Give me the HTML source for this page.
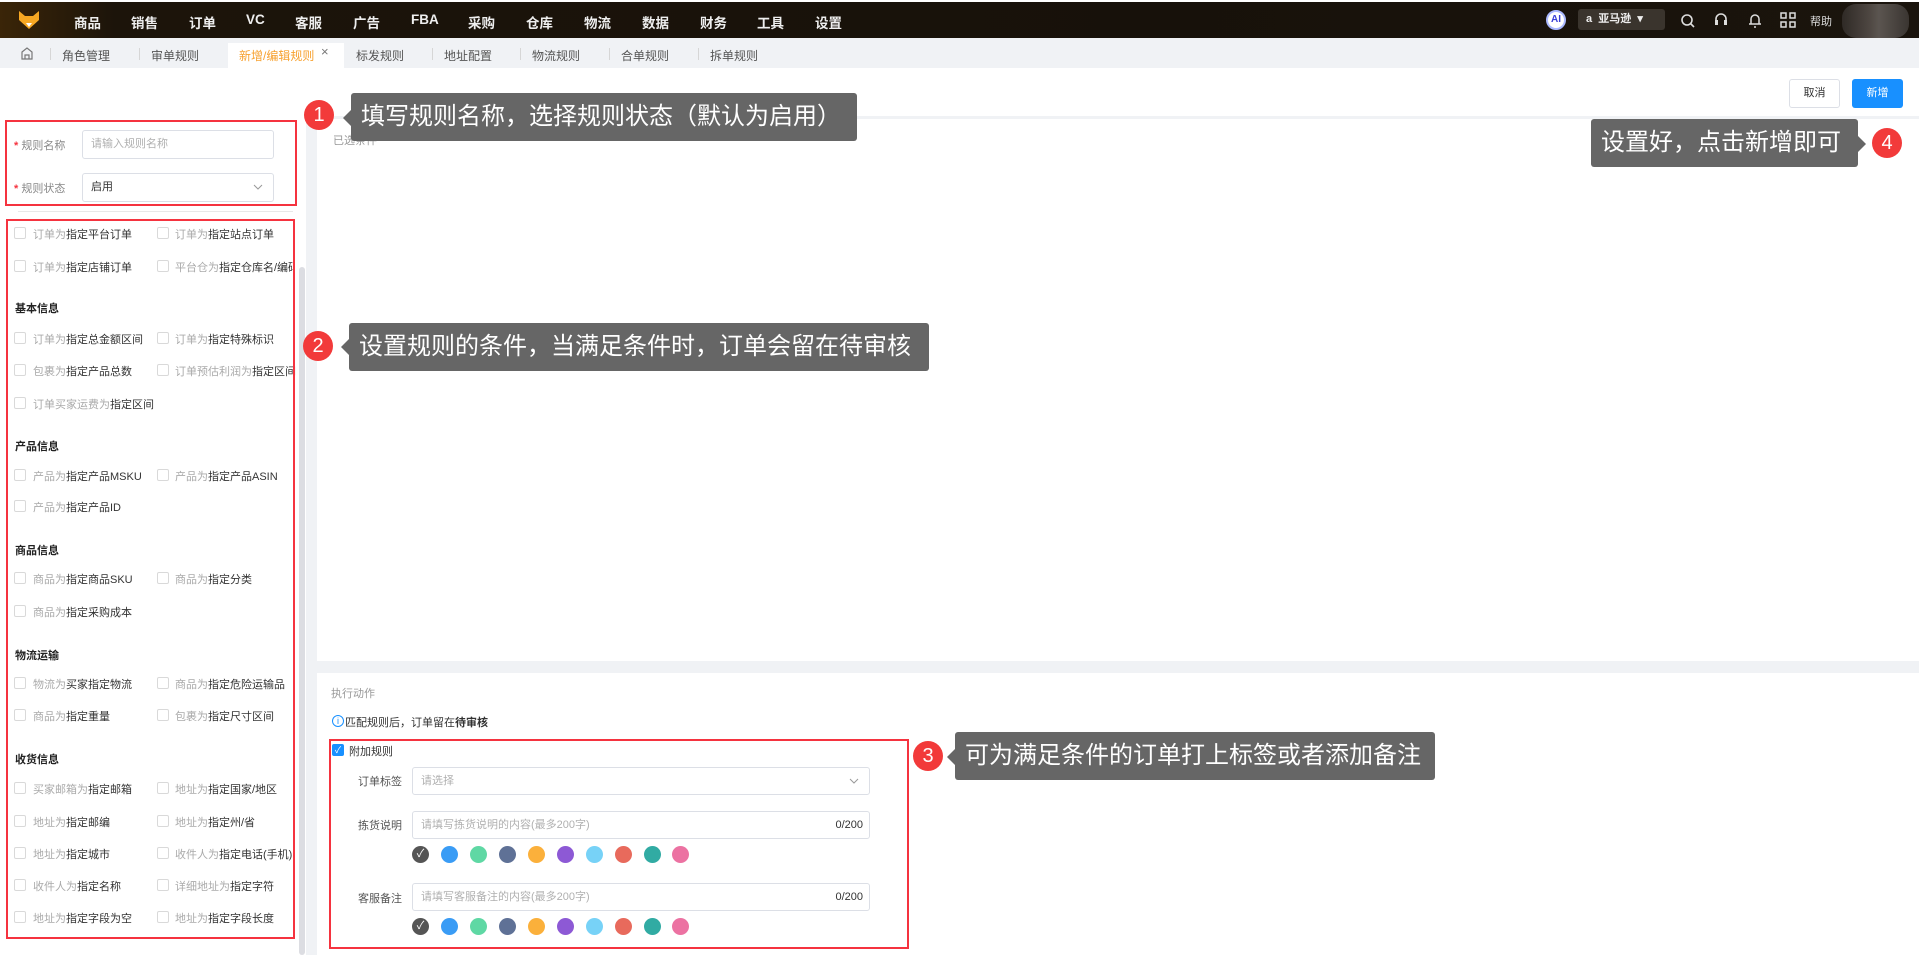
<!DOCTYPE html>
<html><head><meta charset="utf-8">
<style>
*{margin:0;padding:0;box-sizing:border-box}
body{width:1919px;height:955px;overflow:hidden;background:#f0f2f5;font-family:"Liberation Sans","Noto Sans CJK SC",sans-serif;position:relative;color:#333}
.a{position:absolute}
.nav{left:0;top:2px;width:1919px;height:36px;background:linear-gradient(90deg,#3a2508 0%,#1c140a 6%,#17110a 60%,#1a140d 100%)}
.nav .m{position:absolute;top:10px;color:#eee;font-size:13.5px;font-weight:600}
.tabs{left:0;top:38px;width:1919px;height:30px;background:#f0f2f5}
.tab{position:absolute;top:9px;font-size:12px;color:#555}
.sep{position:absolute;top:10px;width:1px;height:12px;background:#d6d6d6}
.lp{left:0;top:68px;width:306px;height:887px;background:#fff}
.t12{font-size:12px}
.cb{position:absolute;width:12px;height:12px;border:1px solid #d9d9d9;border-radius:2px;background:#fff}
.lbl{position:absolute;font-size:11px;color:#333;white-space:nowrap}
.lbl i{font-style:normal;color:#aaa}
.h{position:absolute;left:15px;font-size:11px;font-weight:bold;color:#222}
.redbox{position:absolute;border:2px solid #f5333f}
.tip{position:absolute;background:#666;color:#fff;font-size:24px;line-height:48px;padding:0 10px;border-radius:3px;white-space:nowrap}
.num{position:absolute;width:30px;height:30px;border-radius:50%;background:#f23a3a;color:#fff;font-size:20px;text-align:center;line-height:30px}
.inp{position:absolute;border:1px solid #dcdfe6;border-radius:3px;background:#fff;font-size:11px;color:#b0b0b0;padding-left:8px}
.dot{position:absolute;width:17px;height:17px;border-radius:50%}
.chev{position:absolute;right:10px;top:10px}
</style></head><body>

<div class="a" style="left:0;top:0;width:1919px;height:2px;background:#fff"></div>
<div class="a nav">
  <svg class="a" style="left:18px;top:8px" width="22" height="20" viewBox="0 0 22 20"><path d="M1 1 L7 6 L15 6 L21 1 L21 10 L11 19 L1 10Z" fill="#f7a823"/><path d="M8 13 L11 17 L14 13Z" fill="#fff"/></svg>
  <span class="m" style="left:74px">商品</span>
  <span class="m" style="left:131px">销售</span>
  <span class="m" style="left:189px">订单</span>
  <span class="m" style="left:246px">VC</span>
  <span class="m" style="left:295px">客服</span>
  <span class="m" style="left:353px">广告</span>
  <span class="m" style="left:411px">FBA</span>
  <span class="m" style="left:468px">采购</span>
  <span class="m" style="left:526px">仓库</span>
  <span class="m" style="left:584px">物流</span>
  <span class="m" style="left:642px">数据</span>
  <span class="m" style="left:700px">财务</span>
  <span class="m" style="left:757px">工具</span>
  <span class="m" style="left:815px">设置</span>
  <div class="a" style="left:1546px;top:8px;width:20px;height:20px;border-radius:50%;border:2px solid #aab8ff;color:#3a3fd8;font-size:10px;font-weight:bold;text-align:center;line-height:16px;background:#fff">AI</div>
  <div class="a" style="left:1578px;top:7px;width:87px;height:21px;background:#3a342d;border-radius:3px;color:#eee;font-size:11px;font-weight:bold;line-height:21px;padding-left:8px">a&nbsp; 亚马逊 &nbsp;▾</div>
  <svg class="a" style="left:1680px;top:11px" width="16" height="16" viewBox="0 0 16 16"><circle cx="7" cy="7" r="5" stroke="#ddd" stroke-width="1.6" fill="none"/><path d="M11 11 L14 14" stroke="#ddd" stroke-width="1.6"/></svg>
  <svg class="a" style="left:1713px;top:10px" width="16" height="17" viewBox="0 0 16 17"><path d="M3 10 V7 A5 5 0 0 1 13 7 V10" stroke="#ddd" stroke-width="1.6" fill="none"/><rect x="2" y="8" width="3" height="5" fill="#ddd"/><rect x="11" y="8" width="3" height="5" fill="#ddd"/></svg>
  <svg class="a" style="left:1747px;top:10px" width="16" height="17" viewBox="0 0 16 17"><path d="M4 12 V7 A4 4 0 0 1 12 7 V12 Z M2 12 H14 M7 15 H9" stroke="#ddd" stroke-width="1.5" fill="none"/></svg>
  <svg class="a" style="left:1780px;top:10px" width="16" height="16" viewBox="0 0 16 16"><g stroke="#ddd" stroke-width="1.5" fill="none"><rect x="1" y="1" width="5" height="5"/><rect x="10" y="1" width="5" height="5"/><rect x="1" y="10" width="5" height="5"/><rect x="10" y="10" width="5" height="5"/></g></svg>
  <span class="a" style="left:1810px;top:11px;color:#ddd;font-size:11px">帮助</span>
  <div class="a" style="left:1842px;top:2px;width:67px;height:34px;border-radius:14px;background:linear-gradient(90deg,#2f2a26,#4d4641 40%,#5b5550 55%,#3a3531)"></div>
</div>

<div class="a tabs">
  <svg class="a" style="left:20px;top:8px" width="14" height="14" viewBox="0 0 14 14"><path d="M2 6 L7 2 L12 6 V13 H2Z M5 13 V9 H9 V13" stroke="#777" stroke-width="1.2" fill="none"/></svg>
  <div class="sep" style="left:50px"></div><span class="tab" style="left:62px">角色管理</span>
  <div class="sep" style="left:139px"></div><span class="tab" style="left:151px">审单规则</span>
  <div class="a" style="left:228px;top:5px;width:116px;height:25px;background:#fff"></div>
  <span class="tab" style="left:239px;color:#f7a130">新增/编辑规则</span><span class="tab" style="left:321px;top:6px;font-size:13px;color:#777">×</span>
  <span class="tab" style="left:356px">标发规则</span>
  <div class="sep" style="left:432px"></div><span class="tab" style="left:444px">地址配置</span>
  <div class="sep" style="left:520px"></div><span class="tab" style="left:532px">物流规则</span>
  <div class="sep" style="left:609px"></div><span class="tab" style="left:621px">合单规则</span>
  <div class="sep" style="left:698px"></div><span class="tab" style="left:710px">拆单规则</span>
</div>

<div class="a" style="left:0;top:68px;width:1919px;height:48px;background:#fff"></div>
<span class="a" style="left:15px;top:88px;font-size:11px;color:#333">新增审单规则</span>
<div class="a" style="left:1789px;top:79px;width:51px;height:29px;border:1px solid #dcdfe6;border-radius:3px;background:#fff;font-size:11px;text-align:center;line-height:27px;color:#333">取消</div>
<div class="a" style="left:1852px;top:79px;width:51px;height:29px;border-radius:3px;background:#1890ff;font-size:11px;text-align:center;line-height:29px;color:#fff">新增</div>

<div class="a lp"></div>
<div class="a" style="left:18px;top:211px;width:275px;height:1px;background:#e8e8e8"></div>
<div class="a" style="left:299px;top:267px;width:6px;height:688px;background:#dcdde2;border-radius:3px"></div>
<span class="a" style="left:14px;top:137px;font-size:11px;color:#888"><b style="color:#f5333f">*</b> 规则名称</span>
<div class="inp" style="left:82px;top:130px;width:192px;height:29px;line-height:27px">请输入规则名称</div>
<span class="a" style="left:14px;top:180px;font-size:11px;color:#888"><b style="color:#f5333f">*</b> 规则状态</span>
<div class="inp" style="left:82px;top:173px;width:192px;height:29px;line-height:27px;color:#333">启用<svg class="chev" width="10" height="6" viewBox="0 0 10 6"><path d="M1 1 L5 5 L9 1" stroke="#999" fill="none"/></svg></div>

<div class="cb" style="left:14px;top:227px"></div><span class="lbl" style="left:33px;top:226px"><i>订单为</i>指定平台订单</span>
<div class="cb" style="left:157px;top:227px"></div><span class="lbl" style="left:175px;top:226px"><i>订单为</i>指定站点订单</span>
<div class="cb" style="left:14px;top:260px"></div><span class="lbl" style="left:33px;top:259px"><i>订单为</i>指定店铺订单</span>
<div class="cb" style="left:157px;top:260px"></div><span class="lbl" style="left:175px;top:259px;width:119px;overflow:hidden"><i>平台仓为</i>指定仓库名/编码</span>
<span class="h" style="top:300px">基本信息</span>
<div class="cb" style="left:14px;top:332px"></div><span class="lbl" style="left:33px;top:331px"><i>订单为</i>指定总金额区间</span>
<div class="cb" style="left:157px;top:332px"></div><span class="lbl" style="left:175px;top:331px"><i>订单为</i>指定特殊标识</span>
<div class="cb" style="left:14px;top:364px"></div><span class="lbl" style="left:33px;top:363px"><i>包裹为</i>指定产品总数</span>
<div class="cb" style="left:157px;top:364px"></div><span class="lbl" style="left:175px;top:363px"><i>订单预估利润为</i>指定区间</span>
<div class="cb" style="left:14px;top:397px"></div><span class="lbl" style="left:33px;top:396px"><i>订单买家运费为</i>指定区间</span>
<span class="h" style="top:438px">产品信息</span>
<div class="cb" style="left:14px;top:469px"></div><span class="lbl" style="left:33px;top:468px"><i>产品为</i>指定产品MSKU</span>
<div class="cb" style="left:157px;top:469px"></div><span class="lbl" style="left:175px;top:468px"><i>产品为</i>指定产品ASIN</span>
<div class="cb" style="left:14px;top:500px"></div><span class="lbl" style="left:33px;top:499px"><i>产品为</i>指定产品ID</span>
<span class="h" style="top:542px">商品信息</span>
<div class="cb" style="left:14px;top:572px"></div><span class="lbl" style="left:33px;top:571px"><i>商品为</i>指定商品SKU</span>
<div class="cb" style="left:157px;top:572px"></div><span class="lbl" style="left:175px;top:571px"><i>商品为</i>指定分类</span>
<div class="cb" style="left:14px;top:605px"></div><span class="lbl" style="left:33px;top:604px"><i>商品为</i>指定采购成本</span>
<span class="h" style="top:647px">物流运输</span>
<div class="cb" style="left:14px;top:677px"></div><span class="lbl" style="left:33px;top:676px"><i>物流为</i>买家指定物流</span>
<div class="cb" style="left:157px;top:677px"></div><span class="lbl" style="left:175px;top:676px"><i>商品为</i>指定危险运输品</span>
<div class="cb" style="left:14px;top:709px"></div><span class="lbl" style="left:33px;top:708px"><i>商品为</i>指定重量</span>
<div class="cb" style="left:157px;top:709px"></div><span class="lbl" style="left:175px;top:708px"><i>包裹为</i>指定尺寸区间</span>
<span class="h" style="top:751px">收货信息</span>
<div class="cb" style="left:14px;top:782px"></div><span class="lbl" style="left:33px;top:781px"><i>买家邮箱为</i>指定邮箱</span>
<div class="cb" style="left:157px;top:782px"></div><span class="lbl" style="left:175px;top:781px"><i>地址为</i>指定国家/地区</span>
<div class="cb" style="left:14px;top:815px"></div><span class="lbl" style="left:33px;top:814px"><i>地址为</i>指定邮编</span>
<div class="cb" style="left:157px;top:815px"></div><span class="lbl" style="left:175px;top:814px"><i>地址为</i>指定州/省</span>
<div class="cb" style="left:14px;top:847px"></div><span class="lbl" style="left:33px;top:846px"><i>地址为</i>指定城市</span>
<div class="cb" style="left:157px;top:847px"></div><span class="lbl" style="left:175px;top:846px"><i>收件人为</i>指定电话(手机)</span>
<div class="cb" style="left:14px;top:879px"></div><span class="lbl" style="left:33px;top:878px"><i>收件人为</i>指定名称</span>
<div class="cb" style="left:157px;top:879px"></div><span class="lbl" style="left:175px;top:878px"><i>详细地址为</i>指定字符</span>
<div class="cb" style="left:14px;top:911px"></div><span class="lbl" style="left:33px;top:910px"><i>地址为</i>指定字段为空</span>
<div class="cb" style="left:157px;top:911px"></div><span class="lbl" style="left:175px;top:910px"><i>地址为</i>指定字段长度</span>

<div class="a" style="left:317px;top:119px;width:1602px;height:542px;background:#fff"></div>
<span class="a" style="left:333px;top:132px;font-size:11px;color:#999">已选条件</span>
<div class="a" style="left:317px;top:673px;width:1602px;height:282px;background:#fff"></div>
<span class="a" style="left:331px;top:685px;font-size:11px;color:#999">执行动作</span>
<div class="a" style="left:332px;top:715px;width:12px;height:12px;border:1px solid #1890ff;border-radius:50%;color:#1890ff;font-size:9px;text-align:center;line-height:10px">i</div>
<span class="a" style="left:345px;top:714px;font-size:11px;color:#333">匹配规则后，订单留在<b>待审核</b></span>
<div class="a" style="left:332px;top:744px;width:12px;height:12px;background:#1890ff;border-radius:2px;color:#fff;font-size:9px;text-align:center;line-height:12px">✓</div>
<span class="a" style="left:349px;top:743px;font-size:11px;color:#333">附加规则</span>
<span class="a" style="left:358px;top:773px;font-size:11px;color:#555">订单标签</span>
<div class="inp" style="left:412px;top:767px;width:458px;height:28px;line-height:26px">请选择<svg class="chev" width="10" height="6" viewBox="0 0 10 6"><path d="M1 1 L5 5 L9 1" stroke="#999" fill="none"/></svg></div>
<span class="a" style="left:358px;top:817px;font-size:11px;color:#555">拣货说明</span>
<div class="inp" style="left:412px;top:811px;width:458px;height:28px;line-height:26px">请填写拣货说明的内容(最多200字)<span style="position:absolute;right:6px;color:#333">0/200</span></div>
<span class="a" style="left:358px;top:890px;font-size:11px;color:#555">客服备注</span>
<div class="inp" style="left:412px;top:883px;width:458px;height:28px;line-height:26px">请填写客服备注的内容(最多200字)<span style="position:absolute;right:6px;color:#333">0/200</span></div>

<div class="dot" style="left:412px;top:846px;background:#555;color:#fff;font-size:11px;text-align:center;line-height:17px">✓</div>
<div class="dot" style="left:441px;top:846px;background:#3a9cf5"></div>
<div class="dot" style="left:470px;top:846px;background:#5fd8a4"></div>
<div class="dot" style="left:499px;top:846px;background:#5f7196"></div>
<div class="dot" style="left:528px;top:846px;background:#fbb03b"></div>
<div class="dot" style="left:557px;top:846px;background:#8d59d5"></div>
<div class="dot" style="left:586px;top:846px;background:#77d2f7"></div>
<div class="dot" style="left:615px;top:846px;background:#e86a5c"></div>
<div class="dot" style="left:644px;top:846px;background:#31aba3"></div>
<div class="dot" style="left:672px;top:846px;background:#ec72a2"></div>
<div class="dot" style="left:412px;top:918px;background:#555;color:#fff;font-size:11px;text-align:center;line-height:17px">✓</div>
<div class="dot" style="left:441px;top:918px;background:#3a9cf5"></div>
<div class="dot" style="left:470px;top:918px;background:#5fd8a4"></div>
<div class="dot" style="left:499px;top:918px;background:#5f7196"></div>
<div class="dot" style="left:528px;top:918px;background:#fbb03b"></div>
<div class="dot" style="left:557px;top:918px;background:#8d59d5"></div>
<div class="dot" style="left:586px;top:918px;background:#77d2f7"></div>
<div class="dot" style="left:615px;top:918px;background:#e86a5c"></div>
<div class="dot" style="left:644px;top:918px;background:#31aba3"></div>
<div class="dot" style="left:672px;top:918px;background:#ec72a2"></div>

<div class="redbox" style="left:5px;top:120px;width:292px;height:86px"></div>
<div class="redbox" style="left:6px;top:219px;width:289px;height:720px"></div>
<div class="redbox" style="left:329px;top:739px;width:580px;height:210px"></div>

<div class="num" style="left:304px;top:100px">1</div>
<div class="a" style="left:343px;top:110px;border:8px solid transparent;border-right-color:#666;border-left:0"></div>
<div class="tip" style="left:351px;top:93px;width:506px">填写规则名称，选择规则状态（默认为启用）</div>

<div class="num" style="left:303px;top:331px">2</div>
<div class="a" style="left:341px;top:339px;border:8px solid transparent;border-right-color:#666;border-left:0"></div>
<div class="tip" style="left:349px;top:323px;width:580px">设置规则的条件，当满足条件时，订单会留在待审核</div>

<div class="num" style="left:913px;top:741px">3</div>
<div class="a" style="left:947px;top:749px;border:8px solid transparent;border-right-color:#666;border-left:0"></div>
<div class="tip" style="left:955px;top:732px;width:480px">可为满足条件的订单打上标签或者添加备注</div>

<div class="tip" style="left:1591px;top:119px;width:267px">设置好，点击新增即可</div>
<div class="a" style="left:1858px;top:136px;border:8px solid transparent;border-left-color:#666;border-right:0"></div>
<div class="num" style="left:1872px;top:128px">4</div>

</body></html>
